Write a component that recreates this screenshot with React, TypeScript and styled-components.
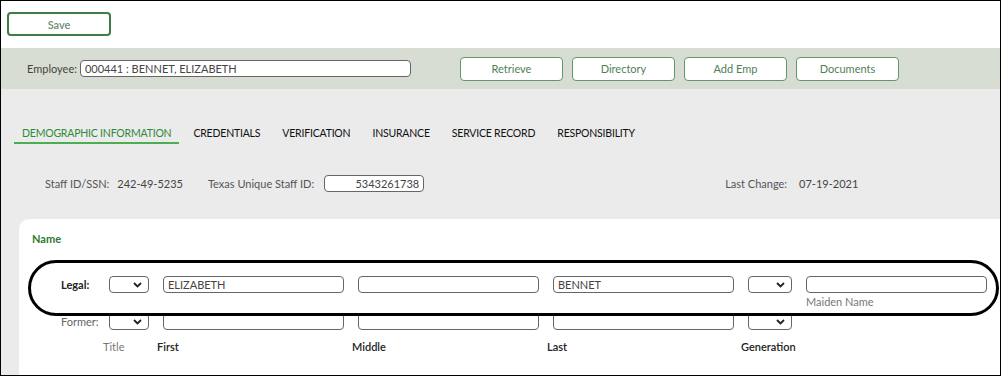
import styled, { createGlobalStyle } from "styled-components";

const GlobalStyle = createGlobalStyle`
    body {
        margin: 0;
        font-family: Lato, "Open Sans", sans-serif;
        font-size: 11px;
        color: #333;
    }
`

const Frame = styled.div`
    position: relative;
    box-sizing: border-box;
    width: 1001px;
    height: 376px;
    border: 1px solid #000;
    background-color: #ebebeb;
    overflow: hidden;
    display: flex;
    flex-direction: column;
`
const TopBar = styled.div`
    height: 47px;
    padding: 11px 0 0 6px;
    box-sizing: border-box;
    background-color: #fff;
`
const SaveButton = styled.button`
    width: 104px;
    height: 24px;
    border: 2px solid #3f7d47;
    border-radius: 4px;
    background: #fff;
    color: #6a8f72;
    font-family: inherit;
    font-size: 11px;
    font-weight: 600;
`
const EmployeeBar = styled.div`
    height: 41px;
    display: flex;
    align-items: center;
    padding-left: 26px;
    background-color: #d8ddd3;
`
const BarLabel = styled.span`
    color: #444;
    margin-right: 3px;
`
const TextBox = styled.div<{ $w: number; $align?: string }>`
    flex-shrink: 0;
    box-sizing: border-box;
    width: ${(p) => p.$w}px;
    height: 17px;
    border: 1px solid #666;
    border-radius: 4px;
    background: #fff;
    padding: 0 4px;
    line-height: 15px;
    color: #444;
    text-align: ${(p) => p.$align || "left"};
    white-space: nowrap;
    overflow: hidden;
`
const ButtonGroup = styled.div`
    display: flex;
    gap: 9px;
    margin-left: 49px;
`
const BarButton = styled.button`
    width: 103px;
    height: 24px;
    border: 1px solid #5f9a66;
    border-radius: 4px;
    background: #fff;
    color: #4f7f58;
    font-family: inherit;
    font-size: 11px;
`
const Tabs = styled.div`
    display: flex;
    gap: 6px;
    padding: 37px 0 0 13px;
`
const Tab = styled.div<{ $active?: boolean }>`
    padding: 0 8px 2px;
    line-height: 14px;
    font-weight: 400;
    font-size: 10.5px;
    letter-spacing: -0.2px;
    color: ${(p) => (p.$active ? "#2f8a38" : "#111")};
    border-bottom: 2px solid ${(p) => (p.$active ? "#4cae52" : "transparent")};
`
const InfoRow = styled.div`
    display: flex;
    align-items: center;
    height: 17px;
    margin-top: 31px;
    padding-left: 44px;
    color: #555;
`
const InfoLabel = styled.span<{ $ml?: number; $mr?: number }>`
    margin-left: ${(p) => p.$ml || 0}px;
    margin-right: ${(p) => p.$mr || 10}px;
`
const InfoValue = styled.span`
    color: #444;
`
const Card = styled.div`
    flex: 1;
    margin: 27px 0 0 18px;
    padding: 13px 0 0 13px;
    background: #fff;
    border-top-left-radius: 10px;
`
const SectionTitle = styled.div`
    color: #2e7a34;
    font-weight: 700;
    line-height: 14px;
`
const FieldRow = styled.div<{ $mt: number }>`
    display: flex;
    align-items: flex-start;
    gap: 14px;
    margin-top: ${(p) => p.$mt}px;
`
const RowLabel = styled.div<{ $bold?: boolean }>`
    flex-shrink: 0;
    box-sizing: border-box;
    width: 63px;
    padding-left: 29px;
    line-height: 17px;
    font-weight: ${(p) => (p.$bold ? 700 : 400)};
    color: ${(p) => (p.$bold ? "#222" : "#666")};
`
const Field = styled.div`
    flex-shrink: 0;
    display: flex;
    flex-direction: column;
`
const Caption = styled.div`
    margin-top: 2px;
    line-height: 14px;
    color: #777;
`
const SelectBox = styled.div<{ $w: number }>`
    flex-shrink: 0;
    box-sizing: border-box;
    width: ${(p) => p.$w}px;
    height: 17px;
    border: 1px solid #666;
    border-radius: 4px;
    background: #fff;
    display: flex;
    align-items: center;
    justify-content: flex-end;
    padding-right: 6px;
`
const ColumnLabels = styled.div`
    display: flex;
    margin-top: 10px;
    line-height: 14px;
`
const ColLabel = styled.div<{ $w: number; $muted?: boolean }>`
    width: ${(p) => p.$w}px;
    color: ${(p) => (p.$muted ? "#777" : "#222")};
    font-weight: ${(p) => (p.$muted ? 400 : 600)};
`
const Highlight = styled.div`
    position: absolute;
    left: 27px;
    top: 259px;
    width: 971px;
    height: 56px;
    box-sizing: border-box;
    border: 3px solid #000;
    border-radius: 28px;
    pointer-events: none;
`

const Chevron = () => (
    <svg width="9" height="6" viewBox="0 0 9 6">
        <path d="M1 1 L4.5 4.5 L8 1" fill="none" stroke="#222" strokeWidth="1.8" />
    </svg>
)

const Select = ({ w }: { w: number }) => (
    <SelectBox $w={w}>
        <Chevron />
    </SelectBox>
)

export default function App() {
    const tabs = ["DEMOGRAPHIC INFORMATION", "CREDENTIALS", "VERIFICATION", "INSURANCE", "SERVICE RECORD", "RESPONSIBILITY"]
    return (
        <>
            <GlobalStyle />
            <Frame>
                <TopBar>
                    <SaveButton>Save</SaveButton>
                </TopBar>
                <EmployeeBar>
                    <BarLabel>Employee:</BarLabel>
                    <TextBox $w={331}>000441 : BENNET, ELIZABETH</TextBox>
                    <ButtonGroup>
                        <BarButton>Retrieve</BarButton>
                        <BarButton>Directory</BarButton>
                        <BarButton>Add Emp</BarButton>
                        <BarButton>Documents</BarButton>
                    </ButtonGroup>
                </EmployeeBar>
                <Tabs>
                    {tabs.map((t, i) => (
                        <Tab key={t} $active={i === 0}>{t}</Tab>
                    ))}
                </Tabs>
                <InfoRow>
                    <InfoLabel $mr={8}>Staff ID/SSN:</InfoLabel>
                    <InfoValue>242-49-5235</InfoValue>
                    <InfoLabel $ml={25}>Texas Unique Staff ID:</InfoLabel>
                    <TextBox $w={100} $align="right">5343261738</TextBox>
                    <InfoLabel $ml={301} $mr={12}>Last Change:</InfoLabel>
                    <InfoValue>07-19-2021</InfoValue>
                </InfoRow>
                <Card>
                    <SectionTitle>Name</SectionTitle>
                    <FieldRow $mt={30}>
                        <RowLabel $bold>Legal:</RowLabel>
                        <Select w={40} />
                        <TextBox $w={181}>ELIZABETH</TextBox>
                        <TextBox $w={181} />
                        <TextBox $w={181}>BENNET</TextBox>
                        <Select w={44} />
                        <Field>
                            <TextBox $w={181} />
                            <Caption>Maiden Name</Caption>
                        </Field>
                    </FieldRow>
                    <FieldRow $mt={4}>
                        <RowLabel>Former:</RowLabel>
                        <Select w={40} />
                        <TextBox $w={181} />
                        <TextBox $w={181} />
                        <TextBox $w={181} />
                        <Select w={44} />
                    </FieldRow>
                    <ColumnLabels>
                        <ColLabel $w={71} />
                        <ColLabel $w={54} $muted>Title</ColLabel>
                        <ColLabel $w={195}>First</ColLabel>
                        <ColLabel $w={195}>Middle</ColLabel>
                        <ColLabel $w={194}>Last</ColLabel>
                        <ColLabel $w={80}>Generation</ColLabel>
                    </ColumnLabels>
                </Card>
                <Highlight />
            </Frame>
        </>
    )
}
